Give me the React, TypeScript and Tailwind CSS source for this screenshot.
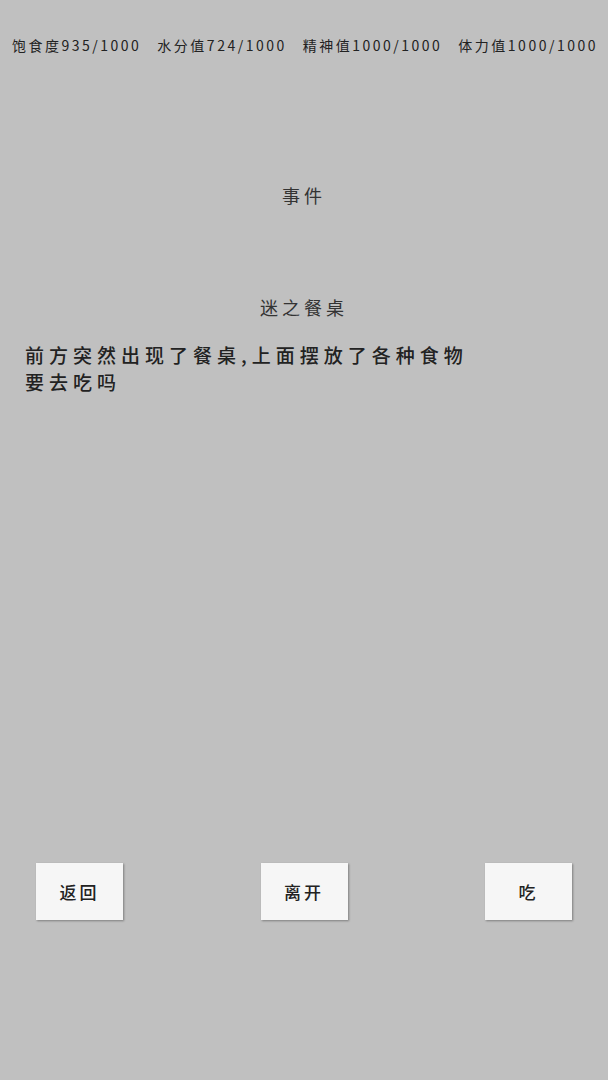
import React from "react";

const stats = [
  { label: "饱食度", value: "935/1000" },
  { label: "水分值", value: "724/1000" },
  { label: "精神值", value: "1000/1000" },
  { label: "体力值", value: "1000/1000" },
];

const actions = ["返回", "离开", "吃"];

export default function App() {
  return (
    <div
      className="flex h-[1080px] w-[608px] flex-col bg-[#c0c0c0] text-[#222]"
      style={{ fontFamily: '"Noto Sans CJK SC", "Noto Sans", sans-serif' }}
    >
      {/* Status bar */}
      <div className="flex justify-between pl-[12px] pr-[10px] pt-[36px] text-[14px] leading-[18px] tracking-[2.5px]">
        {stats.map((s) => (
          <span key={s.label}>
            {s.label}
            {s.value}
          </span>
        ))}
      </div>

      {/* Event title */}
      <p className="mt-[129px] text-center text-[18px] leading-[24px] tracking-[4px] text-[#333]">事件</p>

      <p className="mt-[88px] text-center text-[18px] leading-[24px] tracking-[4px] text-[#333]">迷之餐桌</p>

      {/* Description */}
      <div className="mt-[22px] px-[25px] text-[19px] font-medium leading-[27px] tracking-[5px]">
        <p>前方突然出现了餐桌,上面摆放了各种食物</p>
        <p>要去吃吗</p>
      </div>

      {/* Actions */}
      <div className="mt-[468px] flex justify-between px-[36px]">
        {actions.map((a) => (
          <button
            key={a}
            className="flex h-[57px] w-[87px] items-center justify-center bg-[#f6f6f6] text-[17px] font-medium tracking-[3px] shadow-[1px_1px_2px_rgba(0,0,0,0.35)]"
          >
            {a}
          </button>
        ))}
      </div>
    </div>
  );
}
